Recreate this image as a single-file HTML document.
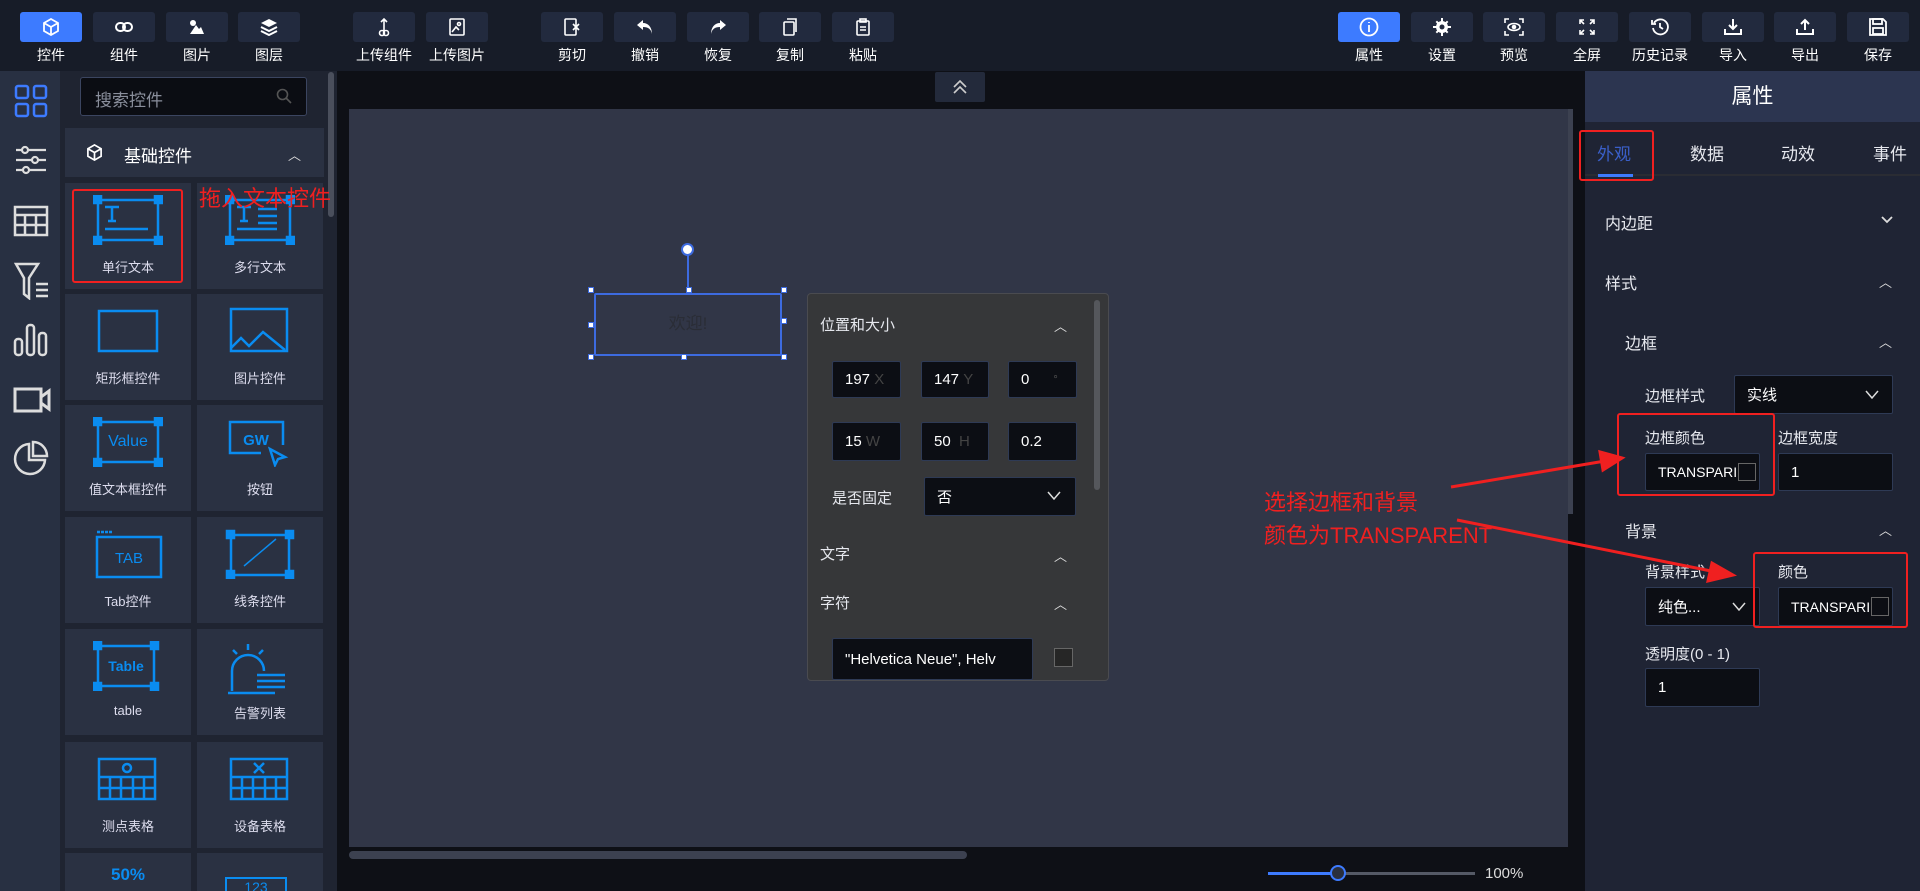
<!DOCTYPE html>
<html><head><meta charset="utf-8"><style>
*{margin:0;padding:0;box-sizing:border-box}
html,body{width:1920px;height:891px;overflow:hidden}
body{background:#0e1016;font-family:"Liberation Sans","Noto Sans CJK SC",sans-serif;color:#e6e8ee}
#root{position:relative;width:1920px;height:891px;overflow:hidden}
.a{position:absolute}
.tb{left:0;top:0;width:1920px;height:71px;background:#171c28}
.btn{position:absolute;top:12px;width:62px;height:30px;background:#222a3e;border-radius:3px;display:flex;align-items:center;justify-content:center}
.btn.on{background:#3d7bff}
.lbl{position:absolute;top:45px;width:80px;text-align:center;font-size:14px;color:#fff}
.cell{position:absolute;width:126px;height:106px;background:#2a3142}
.cell span{position:absolute;left:0;right:0;top:74px;text-align:center;font-size:13px;color:#dde}
.cell svg{position:absolute;left:28px;top:12px}
.in{position:absolute;background:#0c0e14;border:1px solid #2e3a55;border-radius:2px;font-size:15px;color:#fff;padding-left:12px;display:flex;align-items:center}
.chev{position:absolute;font-size:13px;color:#ddd}
.rt{font-size:15px;color:#e6e8ee;position:absolute}
</style></head><body><div id="root">
<div class="a tb"></div>
<div class="btn on" style="left:20px"><svg width="18" height="18" viewBox="0 0 18 18" fill="none" stroke="#fff" stroke-width="1.8"><path d="M9 1L16 5V13L9 17L2 13V5Z M2 5L9 9L16 5 M9 9V17"/></svg></div><div class="lbl" style="left:11px">控件</div>
<div class="btn" style="left:93px"><svg width="18" height="12" viewBox="0 0 18 12" fill="none" stroke="#fff" stroke-width="2"><rect x="1" y="2" width="9" height="8" rx="4"/><rect x="8" y="2" width="9" height="8" rx="4"/></svg></div><div class="lbl" style="left:84px">组件</div>
<div class="btn" style="left:166px"><svg width="16" height="16" viewBox="0 0 16 16" fill="#fff"><circle cx="4" cy="4" r="3"/><path d="M1 15L7 6L10 10L12 8L15 15Z"/></svg></div><div class="lbl" style="left:157px">图片</div>
<div class="btn" style="left:238px"><svg width="18" height="18" viewBox="0 0 18 18" fill="#fff"><path d="M9 1L17 5L9 9L1 5Z"/><path d="M1 9L9 13L17 9" stroke="#fff" stroke-width="2" fill="none"/><path d="M1 13L9 17L17 13" stroke="#fff" stroke-width="2" fill="none"/></svg></div><div class="lbl" style="left:229px">图层</div>
<div class="btn" style="left:353px"><svg width="14" height="20" viewBox="0 0 14 20" fill="none" stroke="#fff" stroke-width="1.6"><path d="M7 14V2M4 5L7 2L10 5"/><circle cx="5" cy="16" r="2.5"/><circle cx="9" cy="16" r="2.5"/></svg></div><div class="lbl" style="left:344px">上传组件</div>
<div class="btn" style="left:426px"><svg width="16" height="18" viewBox="0 0 16 18" fill="none" stroke="#fff" stroke-width="1.6"><rect x="1" y="1" width="14" height="16" rx="1"/><path d="M3 14L7 9L10 12"/><circle cx="10" cy="6" r="1.5"/></svg></div><div class="lbl" style="left:417px">上传图片</div>
<div class="btn" style="left:541px"><svg width="16" height="18" viewBox="0 0 16 18" fill="none" stroke="#fff" stroke-width="1.6"><rect x="1" y="1" width="11" height="16" rx="1"/><path d="M9 6L15 12M15 6L9 12"/></svg></div><div class="lbl" style="left:532px">剪切</div>
<div class="btn" style="left:614px"><svg width="18" height="16" viewBox="0 0 18 16" fill="#fff"><path d="M7 1L1 6L7 11V8C12 8 15 10 16 15C16 8 12 4 7 4Z"/></svg></div><div class="lbl" style="left:605px">撤销</div>
<div class="btn" style="left:687px"><svg width="18" height="16" viewBox="0 0 18 16" fill="#fff"><path d="M11 1L17 6L11 11V8C6 8 3 10 2 15C2 8 6 4 11 4Z"/></svg></div><div class="lbl" style="left:678px">恢复</div>
<div class="btn" style="left:759px"><svg width="16" height="18" viewBox="0 0 16 18" fill="none" stroke="#fff" stroke-width="1.6"><rect x="2" y="4" width="10" height="13" rx="1"/><path d="M5 1H14V14"/></svg></div><div class="lbl" style="left:750px">复制</div>
<div class="btn" style="left:832px"><svg width="16" height="18" viewBox="0 0 16 18" fill="none" stroke="#fff" stroke-width="1.6"><rect x="2" y="3" width="12" height="14" rx="1"/><rect x="5" y="1" width="6" height="3"/><path d="M5 9H11M5 12H11"/></svg></div><div class="lbl" style="left:823px">粘贴</div>

<div class="btn on" style="left:1338px"><svg width="20" height="20" viewBox="0 0 20 20" fill="none" stroke="#fff" stroke-width="1.8"><circle cx="10" cy="10" r="8.5"/><path d="M10 8V15M10 5V6"/></svg></div><div class="lbl" style="left:1329px">属性</div>
<div class="btn" style="left:1411px"><svg width="18" height="18" viewBox="0 0 18 18" fill="#fff"><circle cx="9" cy="9" r="6"/><path d="M8 0H10V18H8ZM0 8H18V10H0Z" /><path d="M2.6 4L4 2.6L15.4 14L14 15.4ZM14 2.6L15.4 4L4 15.4L2.6 14Z"/><circle cx="9" cy="9" r="2.5" fill="#222a3e"/></svg></div><div class="lbl" style="left:1402px">设置</div>
<div class="btn" style="left:1483px"><svg width="20" height="18" viewBox="0 0 20 18" fill="none" stroke="#fff" stroke-width="1.6"><path d="M1 5V1H5M15 1H19V5M19 13V17H15M5 17H1V13"/><ellipse cx="10" cy="9" rx="6" ry="3.5"/><circle cx="10" cy="9" r="1.5" fill="#fff"/></svg></div><div class="lbl" style="left:1474px">预览</div>
<div class="btn" style="left:1556px"><svg width="16" height="16" viewBox="0 0 16 16" fill="none" stroke="#fff" stroke-width="1.6"><path d="M1 5V1H5M1 1L5 5M11 1H15V5M15 1L11 5M15 11V15H11M15 15L11 11M5 15H1V11M1 15L5 11"/></svg></div><div class="lbl" style="left:1547px">全屏</div>
<div class="btn" style="left:1629px"><svg width="18" height="18" viewBox="0 0 18 18" fill="none" stroke="#fff" stroke-width="1.8"><path d="M3 5A7.5 7.5 0 1 1 2 10"/><path d="M1 2V6H5M9 5V9L12 11"/></svg></div><div class="lbl" style="left:1615px;width:90px">历史记录</div>
<div class="btn" style="left:1702px"><svg width="18" height="18" viewBox="0 0 18 18" fill="none" stroke="#fff" stroke-width="2"><path d="M9 1V11M5 7L9 11L13 7M1 11V16H17V11"/></svg></div><div class="lbl" style="left:1693px">导入</div>
<div class="btn" style="left:1774px"><svg width="18" height="18" viewBox="0 0 18 18" fill="none" stroke="#fff" stroke-width="2"><path d="M9 12V2M5 6L9 2L13 6M1 11V16H17V11"/></svg></div><div class="lbl" style="left:1765px">导出</div>
<div class="btn" style="left:1847px"><svg width="18" height="18" viewBox="0 0 18 18" fill="none" stroke="#fff" stroke-width="1.8"><path d="M1 1H14L17 4V17H1Z"/><rect x="4" y="1" width="9" height="5"/><rect x="4" y="10" width="10" height="6"/></svg></div><div class="lbl" style="left:1838px">保存</div>

<div class="a" style="left:0;top:71px;width:60px;height:820px;background:#283042"></div>
<svg class="a" style="left:14px;top:84px" width="34" height="34" viewBox="0 0 34 34" fill="none" stroke="#3d7bff" stroke-width="2.5"><rect x="2" y="2" width="12" height="12" rx="2"/><rect x="20" y="2" width="12" height="12" rx="2"/><rect x="2" y="20" width="12" height="12" rx="2"/><rect x="20" y="20" width="12" height="12" rx="2"/></svg>
<svg class="a" style="left:15px;top:145px" width="32" height="30" viewBox="0 0 32 30" fill="none" stroke="#ddd" stroke-width="2.2"><path d="M1 5H31M1 15H31M1 25H31"/><circle cx="10" cy="5" r="3" fill="#283042"/><circle cx="20" cy="15" r="3" fill="#283042"/><circle cx="11" cy="25" r="3" fill="#283042"/></svg>
<svg class="a" style="left:13px;top:205px" width="36" height="32" viewBox="0 0 36 32" fill="none" stroke="#ddd" stroke-width="2.5"><rect x="2" y="2" width="32" height="28"/><path d="M2 10H34M2 20H34M12 10V30M23 10V30"/></svg>
<svg class="a" style="left:14px;top:262px" width="36" height="38" viewBox="0 0 36 38" fill="none" stroke="#ddd" stroke-width="2.5"><path d="M2 2H24L15 16V36L10 32V16Z"/><path d="M22 22H34M22 28H34M22 34H34"/></svg>
<svg class="a" style="left:13px;top:323px" width="36" height="34" viewBox="0 0 36 34" fill="none" stroke="#ddd" stroke-width="2.5"><rect x="2" y="16" width="7" height="16" rx="3"/><rect x="14" y="2" width="7" height="30" rx="3"/><rect x="26" y="10" width="7" height="22" rx="3"/></svg>
<svg class="a" style="left:13px;top:387px" width="38" height="26" viewBox="0 0 38 26" fill="none" stroke="#ddd" stroke-width="3"><rect x="2" y="2" width="26" height="22"/><path d="M28 10L36 4V22L28 16Z"/></svg>
<svg class="a" style="left:13px;top:440px" width="36" height="36" viewBox="0 0 36 36" fill="none" stroke="#ddd" stroke-width="2.5"><path d="M16 4A15 15 0 1 0 32 20H16Z"/><path d="M20 2A14 14 0 0 1 34 16H20Z"/></svg>

<div class="a" style="left:60px;top:71px;width:277px;height:820px;background:#1f2431;overflow:hidden">
</div>
<div class="a" style="left:328px;top:72px;width:6px;height:145px;background:#4a4f5c;border-radius:3px"></div>
<div class="a" style="left:80px;top:77px;width:227px;height:39px;background:#0b0d13;border:1px solid #3b4560;border-radius:3px;font-size:17px;color:#8a8f9c;padding:8px 0 0 14px">搜索控件</div>
<svg class="a" style="left:276px;top:88px" width="16" height="16" viewBox="0 0 16 16" fill="none" stroke="#555" stroke-width="1.6"><circle cx="6.5" cy="6.5" r="5"/><path d="M10 10L15 15"/></svg>
<div class="a" style="left:65px;top:128px;width:259px;height:49px;background:#2a3142"></div>
<svg class="a" style="left:86px;top:144px" width="17" height="17" viewBox="0 0 18 18" fill="none" stroke="#fff" stroke-width="1.8"><path d="M9 1L16 5V13L9 17L2 13V5Z M2 5L9 9L16 5 M9 9V17"/></svg>
<div class="a" style="left:124px;top:142px;font-size:17px;color:#fff">基础控件</div>
<div class="chev" style="left:288px;top:145px">︿</div>

<div class="cell" style="left:65px;top:183px"><svg width="70" height="50" viewBox="0 0 70 50" fill="none" stroke="#0a8cf0" stroke-width="2.5"><rect x="5" y="5" width="60" height="40"/><rect x="1" y="1" width="7" height="7" fill="#0a8cf0"/><rect x="62" y="1" width="7" height="7" fill="#0a8cf0"/><rect x="1" y="42" width="7" height="7" fill="#0a8cf0"/><rect x="62" y="42" width="7" height="7" fill="#0a8cf0"/><path d="M12 12H26M19 12V26M15 26H23M12 34H55"/></svg><span>单行文本</span></div>
<div class="cell" style="left:197px;top:183px"><svg width="70" height="50" viewBox="0 0 70 50" fill="none" stroke="#0a8cf0" stroke-width="2.5"><rect x="5" y="5" width="60" height="40"/><rect x="1" y="1" width="7" height="7" fill="#0a8cf0"/><rect x="62" y="1" width="7" height="7" fill="#0a8cf0"/><rect x="1" y="42" width="7" height="7" fill="#0a8cf0"/><rect x="62" y="42" width="7" height="7" fill="#0a8cf0"/><path d="M12 12H26M19 12V26M15 26H23M33 14H52M33 21H52M33 28H52M12 34H52"/></svg><span>多行文本</span></div>
<div class="cell" style="left:65px;top:294px"><svg width="70" height="50" viewBox="0 0 70 50" fill="none" stroke="#0a8cf0" stroke-width="2.5"><rect x="6" y="5" width="58" height="40"/></svg><span>矩形框控件</span></div>
<div class="cell" style="left:197px;top:294px"><svg width="70" height="50" viewBox="0 0 70 50" fill="none" stroke="#0a8cf0" stroke-width="2.5"><rect x="6" y="3" width="56" height="42"/><path d="M6 42L16 32L24 40L38 26L60 44"/></svg><span>图片控件</span></div>
<div class="cell" style="left:65px;top:405px"><svg width="70" height="50" viewBox="0 0 70 50" fill="none" stroke="#0a8cf0" stroke-width="2.5"><rect x="5" y="5" width="60" height="40"/><rect x="1" y="1" width="7" height="7" fill="#0a8cf0"/><rect x="62" y="1" width="7" height="7" fill="#0a8cf0"/><rect x="1" y="42" width="7" height="7" fill="#0a8cf0"/><rect x="62" y="42" width="7" height="7" fill="#0a8cf0"/><text x="35" y="29" font-size="16" fill="#0a8cf0" stroke="none" text-anchor="middle" font-family="Liberation Sans">Value</text></svg><span>值文本框控件</span></div>
<div class="cell" style="left:197px;top:405px"><svg width="70" height="50" viewBox="0 0 70 50" fill="none" stroke="#0a8cf0" stroke-width="2.5"><path d="M58 28V5H5V36H36"/><path d="M45 32L60 40L53 42L50 48Z"/><text x="31" y="28" font-size="15" fill="#0a8cf0" stroke="none" text-anchor="middle" font-family="Liberation Sans" font-weight="bold">GW</text></svg><span>按钮</span></div>
<div class="cell" style="left:65px;top:517px"><svg width="70" height="50" viewBox="0 0 70 50" fill="none" stroke="#0a8cf0" stroke-width="2.5"><rect x="4" y="8" width="64" height="40"/><path d="M4 3H20" stroke-dasharray="3 1"/><text x="36" y="34" font-size="15" fill="#0a8cf0" stroke="none" text-anchor="middle" font-family="Liberation Sans">TAB</text></svg><span>Tab控件</span></div>
<div class="cell" style="left:197px;top:517px"><svg width="70" height="50" viewBox="0 0 70 50" fill="none" stroke="#0a8cf0" stroke-width="2.5"><rect x="6" y="6" width="58" height="40"/><rect x="2" y="2" width="7" height="7" fill="#0a8cf0"/><rect x="61" y="2" width="7" height="7" fill="#0a8cf0"/><rect x="2" y="42" width="7" height="7" fill="#0a8cf0"/><rect x="61" y="42" width="7" height="7" fill="#0a8cf0"/><path d="M19 37L51 10" stroke-width="1.5"/></svg><span>线条控件</span></div>
<div class="cell" style="left:65px;top:629px"><svg width="70" height="50" viewBox="0 0 70 50" fill="none" stroke="#0a8cf0" stroke-width="2.5"><rect x="5" y="5" width="56" height="40"/><rect x="1" y="1" width="7" height="7" fill="#0a8cf0"/><rect x="58" y="1" width="7" height="7" fill="#0a8cf0"/><rect x="1" y="42" width="7" height="7" fill="#0a8cf0"/><rect x="58" y="42" width="7" height="7" fill="#0a8cf0"/><text x="33" y="30" font-size="14" fill="#0a8cf0" stroke="none" text-anchor="middle" font-family="Liberation Sans" font-weight="bold">Table</text></svg><span>table</span></div>
<div class="cell" style="left:197px;top:629px"><svg width="70" height="56" viewBox="0 0 70 56" fill="none" stroke="#0a8cf0" stroke-width="2.5"><path d="M7 50V30A16 16 0 0 1 39 30M3 52H50M32 34H60M32 40H60M32 46H60M23 3V9M8 9L12 13M38 9L34 13"/></svg><span>告警列表</span></div>
<div class="cell" style="left:65px;top:742px"><svg width="70" height="50" viewBox="0 0 70 50" fill="none" stroke="#0a8cf0" stroke-width="2.5"><rect x="6" y="5" width="56" height="40"/><path d="M6 23H62M6 34H62M17 23V45M28 23V45M40 23V45M51 23V45"/><circle cx="34" cy="14" r="4"/></svg><span>测点表格</span></div>
<div class="cell" style="left:197px;top:742px"><svg width="70" height="50" viewBox="0 0 70 50" fill="none" stroke="#0a8cf0" stroke-width="2.5"><rect x="6" y="5" width="56" height="40"/><path d="M6 23H62M6 34H62M17 23V45M28 23V45M40 23V45M51 23V45M29 9L39 19M39 9L29 19"/></svg><span>设备表格</span></div>
<div class="cell" style="left:65px;top:853px;height:38px;overflow:hidden"><div style="position:absolute;top:12px;width:126px;text-align:center;color:#0a8cf0;font-size:17px;font-weight:bold">50%</div></div>
<div class="cell" style="left:197px;top:853px;height:38px;overflow:hidden"><div style="position:absolute;left:28px;top:24px;width:62px;height:30px;border:2.5px solid #0a8cf0;color:#0a8cf0;font-size:14px;text-align:center">123</div></div>
<div class="a" style="left:72px;top:189px;width:111px;height:94px;border:2px solid #f02020;border-radius:3px"></div>
<div class="a" style="left:199px;top:181px;font-size:22px;color:#f02020">拖入文本控件</div>

<div class="a" style="left:935px;top:72px;width:50px;height:30px;background:#232a3b;border-radius:2px"></div>
<svg class="a" style="left:951px;top:79px" width="18" height="16" viewBox="0 0 18 16" fill="none" stroke="#ccc" stroke-width="1.6"><path d="M3 8L9 2L15 8M3 14L9 8L15 14"/></svg>
<div class="a" style="left:349px;top:109px;width:1219px;height:738px;background:#313647"></div>
<div class="a" style="left:1568px;top:109px;width:5px;height:405px;background:#3c4150"></div>
<div class="a" style="left:349px;top:851px;width:618px;height:8px;background:#3c4150;border-radius:4px"></div>
<div class="a" style="left:1268px;top:872px;width:70px;height:3px;background:#3d7bff"></div>
<div class="a" style="left:1338px;top:872px;width:137px;height:3px;background:#555a66"></div>
<div class="a" style="left:1330px;top:865px;width:16px;height:16px;border-radius:50%;background:#2a2f3c;border:2px solid #3d7bff"></div>
<div class="a" style="left:1485px;top:865px;font-size:15px;color:#ddd">100%</div>

<div class="a" style="left:594px;top:293px;width:188px;height:63px;border:2px solid #3d6be0;border-radius:2px;font-size:17px;color:#2a2d36;text-align:center;line-height:58px">欢迎!</div>
<div class="a" style="left:687px;top:254px;width:2px;height:38px;background:#3d6be0"></div>
<div class="a" style="left:681px;top:243px;width:13px;height:13px;border-radius:50%;background:#fff;border:2px solid #3d6be0"></div>
<div class="a" style="left:588px;top:287px;width:6px;height:6px;background:#fff;border:1px solid #3d6be0"></div>
<div class="a" style="left:686px;top:287px;width:6px;height:6px;background:#fff;border:1px solid #3d6be0"></div>
<div class="a" style="left:781px;top:287px;width:6px;height:6px;background:#fff;border:1px solid #3d6be0"></div>
<div class="a" style="left:588px;top:322px;width:6px;height:6px;background:#fff;border:1px solid #3d6be0"></div>
<div class="a" style="left:781px;top:318px;width:6px;height:6px;background:#fff;border:1px solid #3d6be0"></div>
<div class="a" style="left:588px;top:354px;width:6px;height:6px;background:#fff;border:1px solid #3d6be0"></div>
<div class="a" style="left:681px;top:354px;width:6px;height:6px;background:#fff;border:1px solid #3d6be0"></div>
<div class="a" style="left:781px;top:354px;width:6px;height:6px;background:#fff;border:1px solid #3d6be0"></div>

<div class="a" style="left:807px;top:293px;width:302px;height:388px;background:#363739;border:1px solid #4a4b50;border-radius:4px"></div>
<div class="a" style="left:1094px;top:300px;width:6px;height:190px;background:#55575c;border-radius:3px"></div>
<div class="rt" style="left:820px;top:314px">位置和大小</div><div class="chev" style="left:1054px;top:316px">︿</div>
<div class="in" style="left:832px;top:361px;width:69px;height:37px">197&nbsp;<span style="color:#444">X</span></div>
<div class="in" style="left:921px;top:361px;width:68px;height:37px">147&nbsp;<span style="color:#444">Y</span></div>
<div class="in" style="left:1008px;top:361px;width:69px;height:37px">0<span style="color:#555;margin-left:24px;font-size:11px">°</span></div>
<div class="in" style="left:832px;top:422px;width:69px;height:39px">15&nbsp;<span style="color:#444">W</span></div>
<div class="in" style="left:921px;top:422px;width:68px;height:39px">50&nbsp;&nbsp;<span style="color:#444">H</span></div>
<div class="in" style="left:1008px;top:422px;width:69px;height:39px">0.2</div>
<div class="rt" style="left:832px;top:487px">是否固定</div>
<div class="in" style="left:924px;top:477px;width:152px;height:39px">否</div>
<svg class="a" style="left:1047px;top:491px" width="14" height="9" viewBox="0 0 14 9" fill="none" stroke="#ddd" stroke-width="1.5"><path d="M1 1L7 8L13 1"/></svg>
<div class="rt" style="left:820px;top:543px">文字</div><div class="chev" style="left:1054px;top:546px">︿</div>
<div class="rt" style="left:820px;top:592px">字符</div><div class="chev" style="left:1054px;top:594px">︿</div>
<div class="in" style="left:832px;top:638px;width:201px;height:42px;white-space:nowrap;overflow:hidden;font-size:15px">"Helvetica Neue", Helv</div>
<div class="a" style="left:1054px;top:648px;width:19px;height:19px;background:#262626;border:1px solid #666"></div>

<div class="a" style="left:1585px;top:71px;width:335px;height:820px;background:#1f2434"></div>
<div class="a" style="left:1585px;top:71px;width:335px;height:51px;background:#2c3550;text-align:center;font-size:21px;color:#fff;line-height:51px">属性</div>
<div class="a" style="left:1585px;top:174px;width:335px;height:2px;background:#2a2c33"></div>
<div class="rt" style="left:1597px;top:140px;font-size:17px;color:#3a5fc8">外观</div>
<div class="a" style="left:1598px;top:174px;width:35px;height:3px;background:#3d7bff"></div>
<div class="rt" style="left:1690px;top:140px;font-size:17px">数据</div>
<div class="rt" style="left:1781px;top:140px;font-size:17px">动效</div>
<div class="rt" style="left:1873px;top:140px;font-size:17px">事件</div>
<div class="a" style="left:1579px;top:130px;width:75px;height:51px;border:2.5px solid #f02020;border-radius:3px"></div>
<div class="rt" style="left:1605px;top:210px;font-size:16px">内边距</div>
<svg class="a" style="left:1881px;top:216px" width="12" height="8" viewBox="0 0 12 8" fill="none" stroke="#ddd" stroke-width="1.8"><path d="M1 1L6 6L11 1"/></svg>
<div class="rt" style="left:1605px;top:270px;font-size:16px">样式</div><div class="chev" style="left:1879px;top:272px">︿</div>
<div class="rt" style="left:1625px;top:330px;font-size:16px">边框</div><div class="chev" style="left:1879px;top:332px">︿</div>
<div class="rt" style="left:1645px;top:385px">边框样式</div>
<div class="in" style="left:1734px;top:375px;width:159px;height:39px">实线</div>
<svg class="a" style="left:1865px;top:390px" width="14" height="9" viewBox="0 0 14 9" fill="none" stroke="#ddd" stroke-width="1.5"><path d="M1 1L7 8L13 1"/></svg>
<div class="rt" style="left:1645px;top:427px">边框颜色</div>
<div class="rt" style="left:1778px;top:427px">边框宽度</div>
<div class="in" style="left:1645px;top:453px;width:115px;height:38px;font-size:14px;overflow:hidden;white-space:nowrap">TRANSPARI</div>
<div class="a" style="left:1738px;top:463px;width:18px;height:18px;border:1px solid #666;background:#0c0e14"></div>
<div class="in" style="left:1778px;top:453px;width:115px;height:38px">1</div>
<div class="a" style="left:1617px;top:413px;width:158px;height:83px;border:2.5px solid #f02020;border-radius:3px"></div>
<div class="rt" style="left:1625px;top:518px;font-size:16px">背景</div><div class="chev" style="left:1879px;top:520px">︿</div>
<div class="rt" style="left:1645px;top:561px">背景样式</div>
<div class="rt" style="left:1778px;top:561px">颜色</div>
<div class="in" style="left:1645px;top:587px;width:115px;height:39px">纯色...</div>
<svg class="a" style="left:1732px;top:602px" width="14" height="9" viewBox="0 0 14 9" fill="none" stroke="#ddd" stroke-width="1.5"><path d="M1 1L7 8L13 1"/></svg>
<div class="in" style="left:1778px;top:587px;width:115px;height:39px;font-size:14px;overflow:hidden;white-space:nowrap">TRANSPARI</div>
<div class="a" style="left:1871px;top:597px;width:18px;height:19px;border:1px solid #666;background:#0c0e14"></div>
<div class="a" style="left:1753px;top:552px;width:155px;height:76px;border:2.5px solid #f02020;border-radius:3px"></div>
<div class="rt" style="left:1645px;top:643px">透明度(0 - 1)</div>
<div class="in" style="left:1645px;top:668px;width:115px;height:39px">1</div>

<div class="a" style="left:1264px;top:486px;font-size:22px;color:#f02020;line-height:33px">选择边框和背景<br>颜色为TRANSPARENT</div>
<svg class="a" style="left:0;top:0" width="1920" height="891" viewBox="0 0 1920 891" fill="#f02020" stroke="#f02020" stroke-width="3"><path d="M1451 487L1605 461" fill="none"/><path d="M1622 458L1600 452L1603 470Z"/><path d="M1457 520L1716 572" fill="none"/><path d="M1733 575L1712 563L1708 581Z"/></svg>
</div></body></html>
